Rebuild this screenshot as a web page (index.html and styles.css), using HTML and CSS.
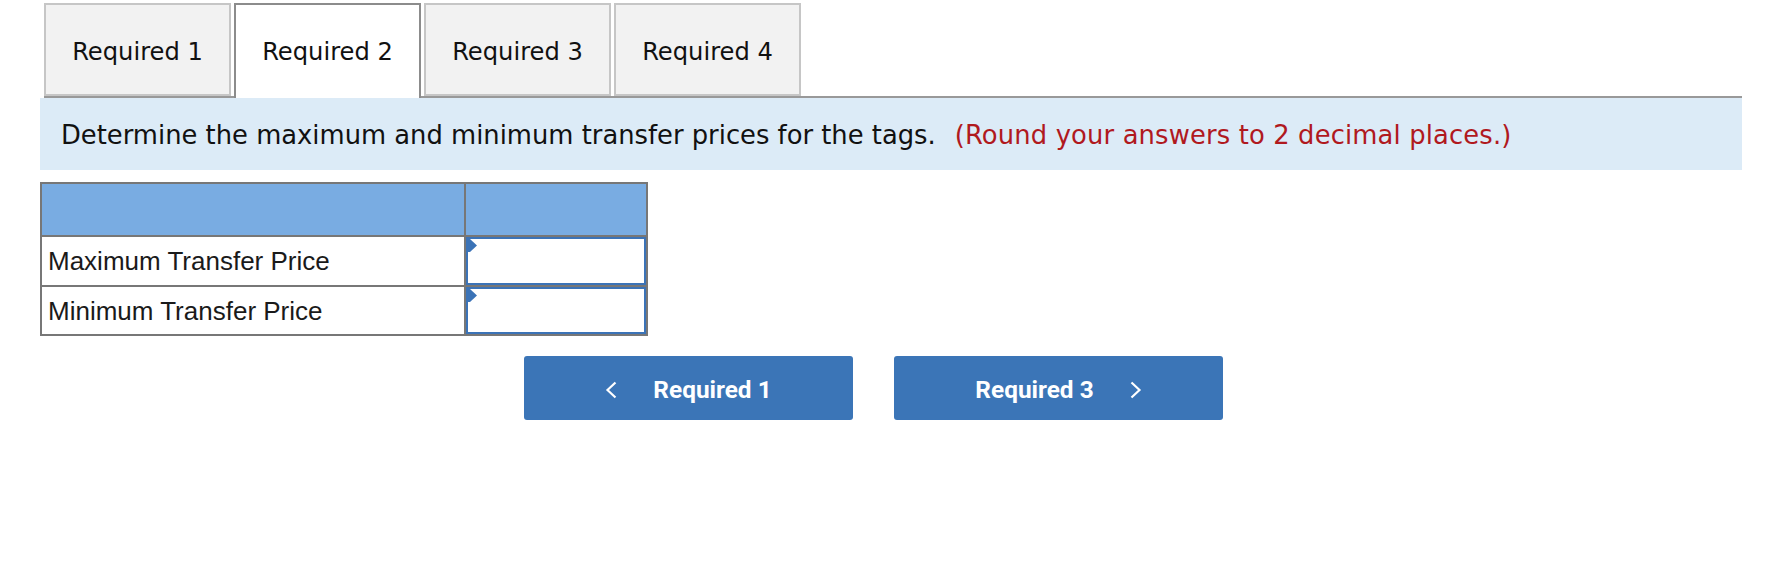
FILE: index.html
```html
<!DOCTYPE html>
<html>
<head>
<meta charset="utf-8">
<link rel="stylesheet" href="styles.css">
</head>
<body>
<div class="page">
  <div class="tabbar">
    <div class="tab">Required 1</div>
    <div class="tab active">Required 2</div>
    <div class="tab">Required 3</div>
    <div class="tab">Required 4</div>
  </div>
  <div class="instruction">
    <span>Determine the maximum and minimum transfer prices for the tags.</span><span class="note">(Round your answers to 2 decimal places.)</span>
  </div>
  <div class="grid">
    <div class="head"></div>
    <div class="head"></div>
    <div class="label">Maximum Transfer Price</div>
    <div class="cell"><div class="input"><svg class="flag" width="11" height="14" viewBox="0 0 11 14"><polygon points="0,0 3,0 10,6.5 3,13 0,13" fill="#3b73b7"/></svg></div></div>
    <div class="label">Minimum Transfer Price</div>
    <div class="cell"><div class="input"><svg class="flag" width="11" height="14" viewBox="0 0 11 14"><polygon points="0,0 3,0 10,6.5 3,13 0,13" fill="#3b73b7"/></svg></div></div>
  </div>
  <div class="nav">
    <div class="btn">
      <svg class="chev" width="12" height="18" viewBox="0 0 12 18"><polyline points="10.5,1.5 2.5,9 10.5,16.5" fill="none" stroke="#fff" stroke-width="2.2"/></svg>
      <span>Required 1</span>
    </div>
    <div class="btn">
      <span>Required 3</span>
      <svg class="chev" width="12" height="18" viewBox="0 0 12 18"><polyline points="1.5,1.5 9.5,9 1.5,16.5" fill="none" stroke="#fff" stroke-width="2.2"/></svg>
    </div>
  </div>
</div>
</body>
</html>
```

FILE: styles.css
```css
html, body {
  margin: 0;
  padding: 0;
  background: #fff;
}

.page {
  padding: 3px 0 0 40px;
  width: 1702px;
}

.tabbar {
  display: flex;
  align-items: flex-start;
  gap: 3px;
  margin-left: 4px;
  border-bottom: 2px solid #999;
}

.tab {
  box-sizing: border-box;
  width: 187px;
  height: 93px;
  border: 2px solid #c6c6c6;
  background: #f2f2f2;
  display: flex;
  align-items: center;
  justify-content: center;
  padding-top: 5px;
  font-family: "DejaVu Sans", Verdana, sans-serif;
  font-size: 24.2px;
  color: #111;
}

.tab.active {
  background: #fff;
  border-color: #8c8c8c;
  border-bottom: none;
  height: 95px;
  margin-bottom: -2px;
  padding-top: 1px;
}

.instruction {
  height: 72px;
  background: #dcebf7;
  display: flex;
  align-items: center;
  padding-left: 21px;
  padding-top: 2px;
  box-sizing: border-box;
  font-family: "DejaVu Sans", Verdana, sans-serif;
  font-size: 25.8px;
  color: #111;
  white-space: pre;
}

.note {
  color: #b0191e;
  margin-left: 19px;
  letter-spacing: 0.15px;
}

.grid {
  margin-top: 12px;
  display: grid;
  grid-template-columns: 422px 180px;
  grid-template-rows: 51px 48px 47px;
  gap: 2px;
  padding: 2px;
  width: 604px;
  background: #777;
}

.head {
  background: #79ace2;
}

.label {
  background: #fff;
  display: flex;
  align-items: center;
  padding-left: 6px;
  padding-top: 1px;
  font-family: "Liberation Sans", Arial, sans-serif;
  font-size: 26px;
  color: #1a1a1a;
}

.cell {
  background: #fff;
  display: flex;
}

.input {
  flex: 1;
  position: relative;
  border: 2px solid #3b73b7;
  background: #fff;
}

.flag {
  position: absolute;
  left: -1px;
  top: 0;
  display: block;
}

.nav {
  display: flex;
  gap: 41px;
  margin-top: 20px;
  padding-left: 484px;
}

.btn {
  box-sizing: border-box;
  width: 329px;
  height: 64px;
  padding-top: 3px;
  background: #3b75b7;
  border-radius: 3px;
  display: flex;
  align-items: center;
  justify-content: center;
  gap: 36px;
  font-family: Roboto, "Liberation Sans", sans-serif;
  font-weight: 700;
  font-size: 24.4px;
  color: #fff;
}

.chev {
  display: block;
}
```
